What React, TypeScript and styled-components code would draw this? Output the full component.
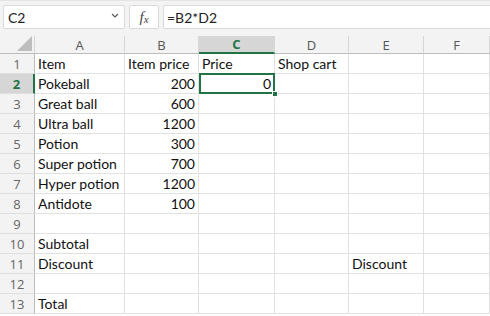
import React from "react";
import styled, { createGlobalStyle } from "styled-components";

const GlobalStyle = createGlobalStyle`
  html, body {
    margin: 0;
    padding: 0;
    background: #ffffff;
    overflow: hidden;
  }
  * {
    box-sizing: border-box;
  }
`;

const GREEN = "#217346";

const columns = ["A", "B", "C", "D", "E", "F"];

type Cell = { text: string; num?: boolean };

const rows: Record<number, Record<string, Cell>> = {
  1: { A: { text: "Item" }, B: { text: "Item price" }, C: { text: "Price" }, D: { text: "Shop cart" } },
  2: { A: { text: "Pokeball" }, B: { text: "200", num: true }, C: { text: "0", num: true } },
  3: { A: { text: "Great ball" }, B: { text: "600", num: true } },
  4: { A: { text: "Ultra ball" }, B: { text: "1200", num: true } },
  5: { A: { text: "Potion" }, B: { text: "300", num: true } },
  6: { A: { text: "Super potion" }, B: { text: "700", num: true } },
  7: { A: { text: "Hyper potion" }, B: { text: "1200", num: true } },
  8: { A: { text: "Antidote" }, B: { text: "100", num: true } },
  9: {},
  10: { A: { text: "Subtotal" } },
  11: { A: { text: "Discount" }, E: { text: "Discount" } },
  12: {},
  13: { A: { text: "Total" } },
};

const selected = { col: "C", row: 2 };

const App: React.FC = () => {
  return (
    <>
      <GlobalStyle />
      <Window>
        <FormulaBar>
          <NameBox>
            <span>C2</span>
            <Chevron viewBox="0 0 8 5">
              <path d="M1 1 L4 4 L7 1" fill="none" stroke="#555" strokeWidth="1.1" />
            </Chevron>
          </NameBox>
          <FxBox>
            <i>f</i>
            <sub>x</sub>
          </FxBox>
          <FormulaInput>=B2*D2</FormulaInput>
        </FormulaBar>

        <Sheet>
          <Corner>
            <svg width="15" height="15" viewBox="0 0 15 15">
              <polygon points="15,0 15,15 0,15" fill="#bdbdbd" />
            </svg>
          </Corner>
          {columns.map((c) => (
            <ColHeader key={c} $active={c === selected.col}>
              {c}
            </ColHeader>
          ))}

          {Object.keys(rows).map((key) => {
            const r = Number(key);
            return (
              <React.Fragment key={r}>
                <RowHeader $active={r === selected.row}>{r}</RowHeader>
                {columns.map((c) => {
                  const cell = rows[r][c];
                  const isSel = c === selected.col && r === selected.row;
                  return (
                    <DataCell key={c} $num={cell?.num} $selected={isSel}>
                      {cell?.text}
                      {isSel && <Handle />}
                    </DataCell>
                  );
                })}
              </React.Fragment>
            );
          })}
        </Sheet>
      </Window>
    </>
  );
};

export default App;

const Window = styled.div`
  width: 490px;
  height: 316px;
  overflow: hidden;
  font-family: Lato, "Open Sans", "Liberation Sans", sans-serif;
`;

const FormulaBar = styled.div`
  height: 36px;
  background: #f3f3f3;
  display: flex;
  align-items: flex-start;
  padding: 4px 0 0 3px;
  gap: 4px;
  border-top: 1px solid #e4e4e4;
`;

const Box = styled.div`
  height: 24px;
  background: #ffffff;
  border: 1px solid #d9d9d9;
  border-radius: 2px;
  display: flex;
  align-items: center;
  font-size: 14px;
  color: #222;
`;

const NameBox = styled(Box)`
  width: 122px;
  padding: 0 5px 0 4px;
  justify-content: space-between;
`;

const Chevron = styled.svg`
  width: 8px;
  height: 5px;
  margin-bottom: 4px;
`;

const FxBox = styled(Box)`
  width: 30px;
  justify-content: center;
  font-family: "Liberation Serif", "DejaVu Serif", serif;
  color: #444;
  font-size: 15px;

  sub {
    font-style: italic;
    font-size: 11px;
    vertical-align: baseline;
    position: relative;
    top: 2px;
  }
`;

const FormulaInput = styled(Box)`
  flex: 1;
  margin-right: -3px;
  padding-left: 3px;
`;

const Sheet = styled.div`
  display: grid;
  grid-template-columns: 35px 90px 74px 76px 74px 75px 1fr;
  grid-template-rows: 18px;
  grid-auto-rows: 20px;
`;

const Corner = styled.div`
  background: #f3f3f3;
  border-right: 1px solid #d6d6d6;
  border-bottom: 1px solid #bcbcbc;
  display: flex;
  align-items: flex-end;
  justify-content: flex-end;
  padding: 0 2px 2px 0;
`;

const ColHeader = styled.div<{ $active?: boolean }>`
  background: ${(p) => (p.$active ? "#d6d6d6" : "#f3f3f3")};
  border-right: 1px solid #d6d6d6;
  border-bottom: ${(p) => (p.$active ? `2px solid ${GREEN}` : "1px solid #bcbcbc")};
  display: flex;
  align-items: center;
  justify-content: center;
  font-family: "Open Sans", "Liberation Sans", sans-serif;
  font-size: 13px;
  font-weight: ${(p) => (p.$active ? 700 : 400)};
  color: ${(p) => (p.$active ? GREEN : "#555")};
`;

const RowHeader = styled.div<{ $active?: boolean }>`
  background: ${(p) => (p.$active ? "#d6d6d6" : "#f3f3f3")};
  border-right: ${(p) => (p.$active ? `2px solid ${GREEN}` : "1px solid #bcbcbc")};
  border-bottom: 1px solid #dedede;
  display: flex;
  align-items: center;
  justify-content: center;
  font-family: "Open Sans", "Liberation Sans", sans-serif;
  font-size: 13px;
  font-weight: ${(p) => (p.$active ? 700 : 400)};
  color: ${(p) => (p.$active ? GREEN : "#666")};
`;

const DataCell = styled.div<{ $num?: boolean; $selected?: boolean }>`
  position: relative;
  border-right: 1px solid #e1e1e1;
  border-bottom: 1px solid #e1e1e1;
  display: flex;
  align-items: center;
  justify-content: ${(p) => (p.$num ? "flex-end" : "flex-start")};
  padding: 0 3px;
  font-size: 14px;
  color: #111;
  white-space: nowrap;

  ${(p) =>
    p.$selected &&
    `
    &::after {
      content: "";
      position: absolute;
      left: 0;
      top: -1px;
      right: -1px;
      bottom: -1px;
      border: 2px solid ${GREEN};
      pointer-events: none;
    }
  `}
`;

const Handle = styled.span`
  position: absolute;
  right: -4px;
  bottom: -4px;
  width: 6px;
  height: 6px;
  background: ${GREEN};
  border: 1px solid #ffffff;
  z-index: 2;
`;
